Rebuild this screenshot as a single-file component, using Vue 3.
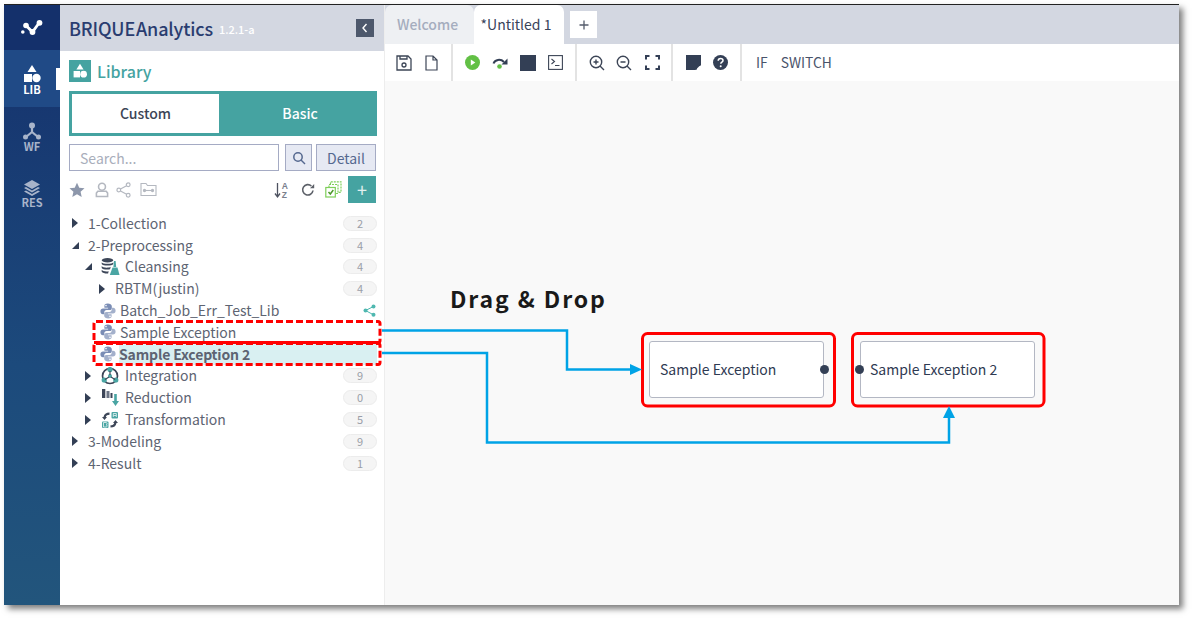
<script setup>
const tree = [
  { label: '1-Collection', indent: 0, arrow: 'right', badge: 2 },
  { label: '2-Preprocessing', indent: 0, arrow: 'down', badge: 4 },
  { label: 'Cleansing', indent: 1, arrow: 'down', badge: 4, icon: 'clean' },
  { label: 'RBTM(justin)', indent: 2, arrow: 'right', badge: 4 },
  { label: 'Batch_Job_Err_Test_Lib', indent: 3, py: true, share: true },
  { label: 'Sample Exception', indent: 3, py: true },
  { label: 'Sample Exception 2', indent: 3, py: true, selected: true },
  { label: 'Integration', indent: 1, arrow: 'right', badge: 9, icon: 'integ' },
  { label: 'Reduction', indent: 1, arrow: 'right', badge: 0, icon: 'reduce' },
  { label: 'Transformation', indent: 1, arrow: 'right', badge: 5, icon: 'trans' },
  { label: '3-Modeling', indent: 0, arrow: 'right', badge: 9 },
  { label: '4-Result', indent: 0, arrow: 'right', badge: 1 }
]
</script>

<template>
  <div class="page">
    <svg width="0" height="0" class="defs">
      <symbol id="py" viewBox="0 0 16 16">
        <path fill="#7a8db5" d="M7.900 .6C5 .6 4.400 1.800 4.400 3V4.800h3.700v.7H3C1.500 5.500.4 6.500.4 8.200c0 1.900 1 3 2.500 3h1.400V9.200c0-1.200 1-2.200 2.200-2.200h3.400c1 0 1.900-.8 1.900-1.800V3C11.600 1.500 10 .6 7.900.6zM6 1.800a.8.8 0 1 1 0 1.600.8.8 0 0 1 0-1.600z"/>
        <path fill="#a3b0cb" d="M8.100 15.400c2.900 0 3.500-1.200 3.500-2.400V11.200H7.900v-.7H13c1.500 0 2.600-1 2.600-2.700 0-1.900-1-3-2.500-3h-1.400v2c0 1.200-1 2.200-2.200 2.200H6.100c-1 0-1.900.8-1.900 1.800V13C4.400 14.500 6 15.400 8.100 15.400zM10 14.200a.8.8 0 1 1 0-1.600.8.8 0 0 1 0 1.600z"/>
      </symbol>
    </svg>
    <div class="frame">
      <nav class="rail">
        <div class="rail-logo">
          <svg width="22" height="18" viewBox="0 0 22 18">
            <path d="M5 6.500l6.500 6.500L18 4" fill="none" stroke="#fff" stroke-width="2.800"/>
            <circle cx="1.800" cy="13" r="1.800" fill="#fff"/><circle cx="5" cy="6.500" r="2.800" fill="#fff"/><circle cx="11.500" cy="13" r="2.900" fill="#fff"/><circle cx="18.500" cy="3.800" r="2.900" fill="#fff"/>
          </svg>
        </div>
        <div class="rail-item active">
          <svg width="20" height="20" viewBox="0 0 20 20" fill="#fff"><path d="M10 1l4.500 7h-9z"/><rect x="2" y="10" width="8" height="8"/><circle cx="14.500" cy="14" r="4.200"/></svg>
          <span>LIB</span>
          <i class="rail-tab"></i>
        </div>
        <div class="rail-item">
          <svg width="20" height="20" viewBox="0 0 20 20" fill="#a8b4ca"><circle cx="10" cy="4.500" r="3"/><circle cx="3.500" cy="16" r="2.500"/><circle cx="16.500" cy="16" r="2.500"/><path d="M10 5v6M10 11l-6 5M10 11l6 5" stroke="#a8b4ca" stroke-width="2.200" fill="none"/></svg>
          <span>WF</span>
        </div>
        <div class="rail-item">
          <svg width="20" height="18" viewBox="0 0 20 18" fill="#a8b4ca"><path d="M10 1l8 4.500-8 4.500-8-4.500z"/><path d="M2 9l2-1 6 3.400L16 8l2 1-8 4.500zM2 12.500l2-1 6 3.400 6-3.400 2 1-8 4.500z"/></svg>
          <span>RES</span>
        </div>
      </nav>

      <aside class="panel">
        <header class="panel-head">
          <span class="brand">BRIQUE<b>Analytics</b></span>
          <span class="version">1.2.1-a</span>
          <span class="collapse">
            <svg width="8" height="10" viewBox="0 0 8 10"><path d="M5.500 1L2 5l3.500 4" fill="none" stroke="#fff" stroke-width="1.400"/></svg>
          </span>
        </header>
        <div class="panel-body">
          <div class="lib-title">
            <span class="lib-icon">
              <svg width="16" height="16" viewBox="0 0 20 20" fill="#fff"><path d="M10 1l4.500 7h-9z"/><rect x="2" y="10" width="8" height="8"/><circle cx="14.500" cy="14" r="4.200"/></svg>
            </span>
            Library
          </div>
          <div class="toggle">
            <div class="toggle-on">Custom</div>
            <div class="toggle-off">Basic</div>
          </div>
          <div class="search-row">
            <div class="search-input">Search...</div>
            <div class="search-btn">
              <svg width="14" height="14" viewBox="0 0 14 14" fill="none" stroke="#55688f" stroke-width="1.500"><circle cx="6" cy="6" r="4.200"/><path d="M9 9l4 4"/></svg>
            </div>
            <div class="detail-btn">Detail</div>
          </div>
          <div class="tool-row">
            <svg class="i-star" width="16" height="16" viewBox="0 0 17 17" fill="#8d97ab"><path d="M8.500.800l2.400 5.200 5.600.6-4.200 3.800 1.200 5.600-5-2.900-5 2.900 1.200-5.600L.5 6.600l5.600-.6z"/></svg>
            <svg class="i-user" width="14" height="16" viewBox="0 0 15 17" fill="none" stroke="#b4b8c0" stroke-width="1.700"><circle cx="7.500" cy="5" r="3.700"/><path d="M3 9.800h9l1.500 2v3.700H1.500v-3.700z"/></svg>
            <svg class="i-share" width="15" height="16" viewBox="0 0 16 17" fill="none" stroke="#b4b8c0" stroke-width="1.300"><circle cx="13" cy="3" r="2"/><circle cx="3" cy="8.500" r="2"/><circle cx="13" cy="14" r="2"/><path d="M11.300 4L4.800 7.500M4.800 9.500l6.500 3.500"/></svg>
            <svg width="17" height="15" viewBox="0 0 17 15" fill="none" stroke="#b4b8c0" stroke-width="1.100"><path d="M1 2.500V13.500H16V3.500H7.500L6 1.500H1z"/><path d="M4 8.500h9"/><circle cx="4.500" cy="8.500" r="1.100"/><circle cx="12.500" cy="8.500" r="1.100"/></svg>
            <span class="spacer"></span>
            <svg width="15" height="18" viewBox="0 0 15 18" fill="none" stroke="#4d5260" stroke-width="1.300"><path d="M3.500 2v13M1 12.500L3.500 16 6 12.500"/><text x="7.800" y="7.500" font-size="8.500" font-weight="700" fill="#7a808d" stroke="none" font-family="Liberation Sans, sans-serif">A</text><text x="7.800" y="17" font-size="8.500" font-weight="700" fill="#7a808d" stroke="none" font-family="Liberation Sans, sans-serif">Z</text></svg>
            <svg width="14" height="14" viewBox="0 0 14 14" class="ico-rf" fill="none" stroke="#5c6068" stroke-width="1.600"><path d="M12 7.500A5.200 5.200 0 1 1 10.400 3"/><path d="M13.200 1v4.300H9z" fill="#5c6068" stroke="none"/></svg>
            <svg width="17" height="17" viewBox="0 0 17 17" class="ico-cp" fill="none" stroke="#7fcf5a" stroke-width="1.200"><path d="M5.500 3.500V.8h10.500v10.500h-2.500" stroke-dasharray="2 1"/><rect x="4" y="3.500" width="9" height="9" fill="#fff" stroke-dasharray="2 1"/><rect x=".8" y="6.500" width="9.500" height="9.500" fill="#fff"/><path d="M3.500 11l1.800 2 3-4" stroke="#4d9a2b" stroke-width="1.500"/></svg>
            <div class="plus-btn">+</div>
          </div>
          <ul class="tree">
            <li v-for="n in tree" :key="n.label" class="row" :class="'ind' + n.indent">
              <i v-if="n.arrow" class="arrow" :class="n.arrow"></i>
              <svg v-if="n.py" class="py" width="16" height="16"><use href="#py"/></svg>
              <svg v-if="n.icon === 'clean'" class="nicon clean" width="19" height="19" viewBox="0 0 19 19">
                <ellipse cx="6.500" cy="3.200" rx="5.800" ry="2.200" fill="#3d4658"/>
                <path d="M.7 5.200c1 2 10.600 2 11.600 0V7c-1 2-10.600 2-11.600 0zM.7 9c1 2 7 2.200 9 .8l-.6 2.400c-2.700.8-7.500.4-8.400-1.300zM.7 12.800c1 1.600 4.500 1.800 7 1.400l-.6 2.200c-2.500.2-5.500-.3-6.400-1.700z" fill="#3d4658"/>
                <path d="M13 4h1.600l.6 6h-2.800z" fill="#4aa5a3"/><path d="M11.500 10.500h5l2 7.500H8.800z" fill="#4aa5a3"/>
              </svg>
              <svg v-if="n.icon === 'integ'" class="nicon" width="18" height="18" viewBox="0 0 18 18" fill="none">
                <circle cx="9" cy="9" r="7.500" stroke="#3d4658" stroke-width="1.700"/>
                <circle cx="9" cy="9" r="2" fill="#4aa5a3"/>
                <circle cx="9" cy="2.500" r="2.600" fill="#4aa5a3"/><circle cx="3.200" cy="13" r="2.600" fill="#4aa5a3"/><circle cx="14.800" cy="13" r="2.600" fill="#4aa5a3"/>
                <path d="M9 4v4M8 10l-4 2.500M10 10l4 2.500" stroke="#3d4658" stroke-width="1.200"/>
              </svg>
              <svg v-if="n.icon === 'reduce'" class="nicon" width="18" height="18" viewBox="0 0 18 18">
                <rect x="1" y="0" width="3.300" height="9" fill="#3d4658"/><rect x="5.500" y="2" width="3" height="7" fill="#6d7585"/><rect x="9.500" y="4" width="2" height="5" fill="#3d4658"/>
                <path d="M13.200 5h2.600v7h2.200l-3.500 5-3.500-5h2.200z" fill="#4aa5a3"/>
              </svg>
              <svg v-if="n.icon === 'trans'" class="nicon" width="18" height="18" viewBox="0 0 18 18">
                <rect x="10.500" y="1" width="6.500" height="6.500" rx="1" fill="#4aa5a3"/><rect x="1" y="10.500" width="6.500" height="6.500" rx="1" fill="#4aa5a3"/>
                <path d="M8.500 1.500C5 1.500 3 3 2.500 6H1l2.500 3L6 6H4.800c.4-1.500 1.700-2.300 3.700-2.300zM9.500 16.500c3.500 0 5.500-1.500 6-4.500H17l-2.500-3L12 12h1.200c-.4 1.500-1.700 2.300-3.700 2.300z" fill="#3d4658"/>
                <path d="M12.300 6V2.500h3V6M12.500 4.500h2.600M2.500 11.500h2.800c1 0 1 2.200 0 2.200 1 0 1 2.300 0 2.300H2.500z" fill="none" stroke="#fff" stroke-width=".7"/>
              </svg>
              <span class="label" :class="{ sel: n.selected }">{{ n.label }}</span>
              <span v-if="n.badge !== undefined" class="badge">{{ n.badge }}</span>
              <svg v-if="n.share" class="share" width="13" height="13" viewBox="0 0 13 13" fill="#4fb8b0"><circle cx="10.500" cy="2.500" r="2"/><circle cx="2.500" cy="6.500" r="2"/><circle cx="10.500" cy="10.800" r="2"/><path d="M10.500 2.500l-8 4 8 4.300" fill="none" stroke="#4fb8b0" stroke-width="1"/></svg>
            </li>
          </ul>
        </div>
      </aside>

      <main class="main">
        <div class="tabbar">
          <div class="tab idle">Welcome</div>
          <div class="tab current">*Untitled 1</div>
          <div class="tab-add">
            <svg width="10" height="10" viewBox="0 0 10 10"><path d="M5 .5v9M.5 5h9" stroke="#555c6c" stroke-width="1.300"/></svg>
          </div>
        </div>
        <div class="toolbar">
          <div class="group g1">
            <svg width="16" height="16" viewBox="0 0 16 16" fill="none" stroke="#3c4556" stroke-width="1.300"><path d="M1 1h11l3 3v11H1z"/><path d="M4 1v3h7V1"/><circle cx="8" cy="10" r="2"/></svg>
            <svg width="13" height="16" viewBox="0 0 13 16" fill="none" stroke="#3c4556" stroke-width="1.200"><path d="M1 1h7l4 4v10H1zM8 1v4h4"/></svg>
          </div>
          <div class="group g2">
            <svg width="15" height="15" viewBox="0 0 15 15"><circle cx="7.500" cy="7.500" r="7.500" fill="#62c045"/><path d="M5.800 4.500l4.500 3-4.500 3z" fill="#fff"/></svg>
            <svg width="16" height="12" viewBox="0 0 16 12" fill="none"><path d="M1.500 6.500C3 2.500 8.500 1.500 12 5" stroke="#333f55" stroke-width="2"/><path d="M15.500 1.500v6h-6z" fill="#333f55"/><circle cx="7.500" cy="9.500" r="2.300" fill="#62c045"/></svg>
            <span class="stop"></span>
            <svg width="15" height="15" viewBox="0 0 15 15" fill="none" stroke="#3c4556" stroke-width="1.100"><rect x=".6" y=".6" width="13.800" height="13.800"/><path d="M3.500 4l3 2.500-3 2.500M7 10.500h4.500"/></svg>
          </div>
          <div class="group g3">
            <svg width="16" height="16" viewBox="0 0 16 16" fill="none" stroke="#3c4556" stroke-width="1.400"><circle cx="7" cy="7" r="5.700"/><path d="M11 11l4 4M4.500 7h5M7 4.500v5"/></svg>
            <svg width="16" height="16" viewBox="0 0 16 16" fill="none" stroke="#3c4556" stroke-width="1.400"><circle cx="7" cy="7" r="5.700"/><path d="M11 11l4 4M4.500 7h5"/></svg>
            <svg width="15" height="15" viewBox="0 0 15 15" fill="none" stroke="#333f55" stroke-width="2"><path d="M1 4.500V1h3.500M10.500 1H14v3.500M14 10.500V14h-3.500M4.500 14H1v-3.500"/></svg>
          </div>
          <div class="group g4">
            <svg width="15" height="15" viewBox="0 0 15 15"><path d="M0 0h15v9.500L9.500 15H0z" fill="#333f55"/><path d="M10.500 14.500v-4h4" fill="none" stroke="#333f55" stroke-width="1"/></svg>
            <svg width="15" height="15" viewBox="0 0 15 15"><circle cx="7.500" cy="7.500" r="7.500" fill="#333f55"/><path d="M5.200 5.800c0-1.500 1-2.300 2.400-2.300s2.400.9 2.400 2c0 1.700-2.200 1.700-2.200 3.300" fill="none" stroke="#fff" stroke-width="1.500"/><circle cx="7.700" cy="11.300" r="1" fill="#fff"/></svg>
          </div>
          <div class="group g5"><span>IF</span><span>SWITCH</span></div>
        </div>
        <div class="canvas"></div>
      </main>

      <div class="drag">Drag &amp; Drop</div>
      <div class="node n1">Sample Exception<i class="port right"></i></div>
      <div class="node n2"><i class="port left"></i>Sample Exception 2</div>

      <svg class="overlay" width="1175" height="600" viewBox="4 5 1175 600" fill="none">
        <rect x="94" y="321.500" width="286" height="21" rx="2" stroke="#f00" stroke-width="3" stroke-dasharray="7 3"/>
        <rect x="94" y="343.500" width="286" height="21" rx="2" stroke="#f00" stroke-width="3" stroke-dasharray="7 3"/>
        <path d="M94 342.500h286" stroke="#f00" stroke-width="3"/>
        <rect x="642.500" y="333.500" width="192" height="72.500" rx="5" stroke="#f00" stroke-width="3"/>
        <rect x="852.500" y="333.500" width="191.500" height="72.500" rx="5" stroke="#f00" stroke-width="3"/>
        <path d="M382 330.500h185v39h65" stroke="#00a3e6" stroke-width="2.500"/>
        <path d="M630 364l12 5.500-12 5.500z" fill="#00a3e6"/>
        <path d="M382 353h105v89.500h462V417" stroke="#00a3e6" stroke-width="2.500"/>
        <path d="M943 418l6-12 6 12z" fill="#00a3e6"/>
      </svg>
    </div>
  </div>
</template>

<style scoped>
.page { width: 1192px; height: 618px; padding: 4px 0 0 4px; box-sizing: border-box; overflow: hidden; background: #fff; font-family: "Noto Sans CJK KR", "Noto Sans", sans-serif; }
.defs { position: absolute; }
.frame { position: relative; display: flex; width: 1175px; height: 601px; box-sizing: border-box; border-top: 1px solid #222; box-shadow: 4px 4px 6px rgba(0,0,0,.5); background: #fff; }
.rail { width: 56px; flex: none; display: flex; flex-direction: column; align-items: stretch; background: linear-gradient(#15306c, #1c4a7c 60%, #22557c); color: #a8b4ca; }
.rail-logo { height: 45px; background: #14306b; display: flex; align-items: center; justify-content: center; }
.rail-item { position: relative; height: 57px; display: flex; flex-direction: column; align-items: center; justify-content: center; font-size: 11px; font-weight: 700; line-height: 11px; padding-top: 1px; box-sizing: border-box; }
.rail-item.active { background: #204a86; color: #fff; }
.rail-tab { position: absolute; right: 0; top: 18px; width: 4px; height: 22px; background: #fff; }
.panel { width: 324px; flex: none; display: flex; flex-direction: column; border-right: 1px solid #ededed; box-sizing: content-box; }
.panel-head { height: 46px; flex: none; background: #d3d7e1; display: flex; align-items: center; padding: 0 9px; box-sizing: border-box; }
.brand { font-size: 18px; font-weight: 500; color: #2a3d70; letter-spacing: -.15px; }
.brand b { font-weight: 500; margin-left: 1px; }
.version { font-size: 11px; color: #fff; margin-left: 6px; font-weight: 500; margin-top: 1px; }
.collapse { margin-left: auto; width: 18px; height: 18px; background: #4d586c; display: flex; align-items: center; justify-content: center; margin-right: 1px; }
.panel-body { padding: 9px 7px 0 9px; }
.lib-title { display: flex; align-items: center; gap: 6px; height: 22px; font-size: 16px; font-weight: 500; color: #45a3a1; line-height: 22px; }
.lib-icon { width: 22px; height: 22px; background: #45a3a1; display: flex; align-items: center; justify-content: center; }
.toggle { display: flex; margin-top: 9px; height: 45px; border: 3px solid #45a3a1; box-sizing: border-box; background: #45a3a1; font-size: 14px; font-weight: 500; }
.toggle-on { width: 147px; padding-bottom: 1px; box-sizing: border-box; background: #fff; color: #3c4556; display: flex; align-items: center; justify-content: center; }
.toggle-off { flex: 1; padding: 0 0 1px 7px; color: #fff; display: flex; align-items: center; justify-content: center; }
.search-row { display: flex; margin-top: 8px; height: 27px; }
.search-input { width: 210px; box-sizing: border-box; border: 1px solid #a5abc4; padding-left: 10px; font-size: 14px; line-height: 26px; color: #a9aebb; }
.search-btn { width: 27px; margin-left: 6px; box-sizing: border-box; border: 1px solid #a5abc4; background: #e6e9f3; display: flex; align-items: center; justify-content: center; }
.detail-btn { width: 60px; margin-left: 4px; box-sizing: border-box; border: 1px solid #a5abc4; background: #e6e9f3; color: #55688f; font-size: 14px; line-height: 26px; text-align: center; }
.tool-row { display: flex; align-items: center; margin-top: 5px; height: 27px; width: 307px; }
.i-star { margin-right: 10px; }
.i-user { margin-right: 7px; }
.i-share { margin-right: 9px; }
.spacer { flex: 1; }
.ico-rf { margin-left: 12px; }
.ico-cp { margin-left: 10px; margin-right: 6px; }
.plus-btn { width: 28px; height: 27px; background: #45a3a1; color: #e2f0ef; font-size: 18px; line-height: 26px; text-align: center; }
.tree { list-style: none; margin: 9.500px 0 0; padding: 0; width: 308px; }
.row { position: relative; height: 21.800px; display: flex; align-items: center; font-size: 14px; color: #5d6472; white-space: nowrap; }
.row.ind0 { padding-left: 3px; }
.row.ind1 { padding-left: 16px; }
.row.ind2 { padding-left: 30px; }
.row.ind3 { padding-left: 31px; }
.arrow { width: 0; height: 0; flex: none; margin-right: 10px; }
.arrow.right { border-left: 6px solid #333f55; border-top: 5px solid transparent; border-bottom: 5px solid transparent; }
.arrow.down { border-right: 7px solid #333f55; border-top: 7px solid transparent; margin-right: 9px; }
.py { flex: none; margin-right: 4px; }
.nicon { flex: none; margin-right: 6px; }
.nicon.clean { margin-right: 5px; }
.label { line-height: 21px; }
.label.sel { font-weight: 700; letter-spacing: -.15px; background: #d9f0f2; position: absolute; left: 50px; right: 0; padding: 0; height: 21px; }
.badge { margin-left: auto; width: 34px; height: 15px; box-sizing: border-box; border: 1px solid #ececec; border-radius: 8px; background: #f5f5f5; font-size: 11px; line-height: 13px; text-align: center; color: #9a9ea8; }
.share { margin-left: auto; margin-right: 1px; }
.main { flex: 1; display: flex; flex-direction: column; }
.tabbar { height: 39px; flex: none; background: #d3d7e1; display: flex; align-items: flex-end; position: relative; }
.tab { height: 39px; box-sizing: border-box; padding-bottom: 2px; display: flex; align-items: center; justify-content: center; font-size: 14px; border-radius: 7px 7px 0 0; }
.tab.idle { width: 89px; background: #eef0f3; color: #a5adbe; font-weight: 500; padding-right: 4px; }
.tab.current { width: 90px; background: #fff; color: #39435a; padding-right: 6px; }
.tab-add { width: 27px; height: 27px; background: #fff; margin: 0 0 6px 6px; display: flex; align-items: center; justify-content: center; }
.toolbar { height: 37px; flex: none; background: #fff; display: flex; align-items: center; }
.group { height: 37px; display: flex; align-items: center; box-sizing: border-box; border-right: 2px solid #e3e3e3; }
.g1 { width: 68px; padding-left: 11px; gap: 13px; }
.g2 { width: 124px; padding-left: 12px; gap: 12px; }
.stop { width: 16px; height: 16px; background: #333f55; }
.g3 { width: 96px; padding-left: 12px; gap: 11px; }
.g3 svg:last-child { margin-left: 2px; }
.g4 { width: 69px; padding-left: 13px; gap: 12px; }
.g5 { border: 0; padding-left: 14px; padding-bottom: 2px; gap: 13px; font-size: 13.800px; color: #49536a; }
.canvas { flex: 1; background: #f9f9f9; }
.drag { position: absolute; left: 446px; top: 279px; font-size: 23px; line-height: 28px; font-weight: 700; color: #1a1a1a; letter-spacing: 1.900px; white-space: nowrap; }
.node { position: absolute; top: 336px; height: 57px; box-sizing: border-box; background: #fff; border: 1px solid #b3b7c3; border-radius: 3px; display: flex; align-items: center; padding: 0 0 2px 10px; font-size: 14px; color: #2f3a52; white-space: nowrap; }
.n1 { left: 645px; width: 175px; }
.n2 { left: 856px; width: 175px; padding-left: 9px; }
.port { position: absolute; width: 9px; height: 9px; border-radius: 50%; background: #333f55; top: 23px; }
.port.right { right: -5.500px; }
.port.left { left: -6px; }
.overlay { position: absolute; left: 0; top: 0; pointer-events: none; }
</style>
